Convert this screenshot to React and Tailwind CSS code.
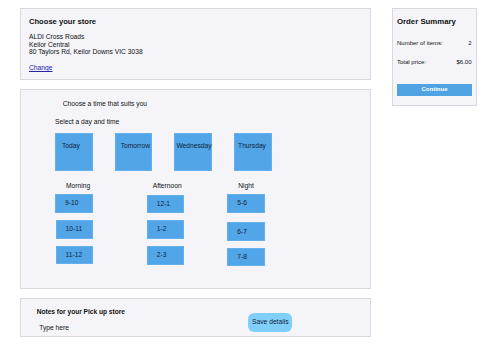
import React from 'react';

const days = [
  { label: 'Today', pad: 'pl-[6px]' },
  { label: 'Tomorrow', pad: 'pl-[5px]' },
  { label: 'Wednesday', pad: 'pl-[1px]' },
  { label: 'Thursday', pad: 'pl-[3px]' },
];

const columns = [
  {
    label: 'Morning',
    colClass: 'ml-[34px]',
    labelClass: 'ml-[11px]',
    slots: [
      { t: '9-10', cls: 'mt-[4.5px] ml-0' },
      { t: '10-11', cls: 'mt-[7.3px] ml-[0.5px]' },
      { t: '11-12', cls: 'mt-[7px] ml-[0.5px]' },
    ],
  },
  {
    label: 'Afternoon',
    colClass: 'ml-[53.7px]',
    labelClass: 'ml-[6px]',
    slots: [
      { t: '12-1', cls: 'mt-[5.2px] ml-0' },
      { t: '1-2', cls: 'mt-[6.7px] ml-0' },
      { t: '2-3', cls: 'mt-[7.3px] ml-0' },
    ],
  },
  {
    label: 'Night',
    colClass: 'ml-[42.6px]',
    labelClass: 'ml-[11px]',
    slots: [
      { t: '5-6', cls: 'mt-[4.5px] ml-0' },
      { t: '6-7', cls: 'mt-[9.7px] ml-0' },
      { t: '7-8', cls: 'mt-[6.7px] ml-0' },
    ],
  },
];

export default function App() {
  return (
    <div
      className="w-[489px] h-[350px] bg-white text-[#111] flex items-start pl-[20px] pt-[8px]"
      style={{ fontFamily: '"Liberation Sans", Arial, sans-serif' }}
    >
      {/* Left column */}
      <div className="w-[351px] flex flex-col">
        {/* Store */}
        <div className="h-[72px] bg-[#f4f4f9] border border-[#d8d8de] pl-[8px] pt-[8px]">
          <div className="text-[7.6px] leading-[9px] font-bold">Choose your store</div>
          <div className="mt-[7px] text-[6.7px] leading-[7.7px]">
            <div>ALDI Cross Roads</div>
            <div>Keilor Central</div>
            <div>80 Taylors Rd, Keilor Downs VIC 3038</div>
          </div>
          <a href="#" className="block mt-[8px] text-[6.7px] leading-[8px] text-[#2323a8] underline">
            Change
          </a>
        </div>

        {/* Time */}
        <div className="mt-[9px] h-[200px] bg-[#f4f4f9] border border-[#d8d8de]">
          <div className="ml-[41.7px] mt-[10px] text-[6.7px] leading-[8px]">Choose a time that suits you</div>
          <div className="ml-[34px] mt-[10px] text-[6.7px] leading-[8px]">Select a day and time</div>
          <div className="ml-[34px] mt-[7px] flex gap-[22.2px]">
            {days.map((d) => (
              <div
                key={d.label}
                className={`w-[37.5px] h-[38px] bg-[#52a6e8] border border-[#63b0ec] ${d.pad} pt-[8px] text-[6.7px] leading-[8px] text-[#10243a] whitespace-nowrap`}
              >
                {d.label}
              </div>
            ))}
          </div>
          <div className="flex mt-[10.5px]">
            {columns.map((c) => (
              <div key={c.label} className={`${c.colClass} flex flex-col w-[38px]`}>
                <div className={`${c.labelClass} text-[6.7px] leading-[8px] whitespace-nowrap`}>{c.label}</div>
                {c.slots.map((s) => (
                  <div
                    key={s.t}
                    className={`${s.cls} w-[37.5px] h-[18.7px] bg-[#52a6e8] border border-[#63b0ec] flex items-center pl-[9px] text-[6.7px] text-[#10243a]`}
                  >
                    {s.t}
                  </div>
                ))}
              </div>
            ))}
          </div>
        </div>

        {/* Notes */}
        <div className="mt-[9px] h-[39px] bg-[#f4f4f9] border border-[#d8d8de] flex">
          <div className="w-[227.3px] pl-[15.7px] pt-[8.5px]">
            <div className="text-[6.6px] leading-[8px] font-bold">Notes for your Pick up store</div>
            <div className="ml-[2.5px] mt-[8px] text-[6.7px] leading-[8px]">Type here</div>
          </div>
          <button className="mt-[13.5px] w-[44px] h-[19px] rounded-[6px] bg-[#80cffa] text-[6.7px] text-[#10243a] flex items-center justify-center">
            Save details
          </button>
        </div>
      </div>

      {/* Order summary */}
      <div className="ml-[21px] w-[85px] h-[98px] bg-[#f4f4f9] border border-[#d8d8de] px-[4px] pt-[8px]">
        <div className="text-[7.8px] leading-[9px] font-bold">Order Summary</div>
        <div className="mt-[14px] flex justify-between text-[6px] leading-[7px] pr-[0.5px]">
          <span>Number of items:</span>
          <span>2</span>
        </div>
        <div className="mt-[11.5px] flex justify-between text-[6px] leading-[7px] pr-[0.5px]">
          <span>Total price:</span>
          <span>$6.00</span>
        </div>
        <button className="mt-[18px] w-full h-[12.7px] bg-[#4fa3e3] text-white text-[6px] font-bold flex items-center justify-center">
          Continue
        </button>
      </div>
    </div>
  );
}
